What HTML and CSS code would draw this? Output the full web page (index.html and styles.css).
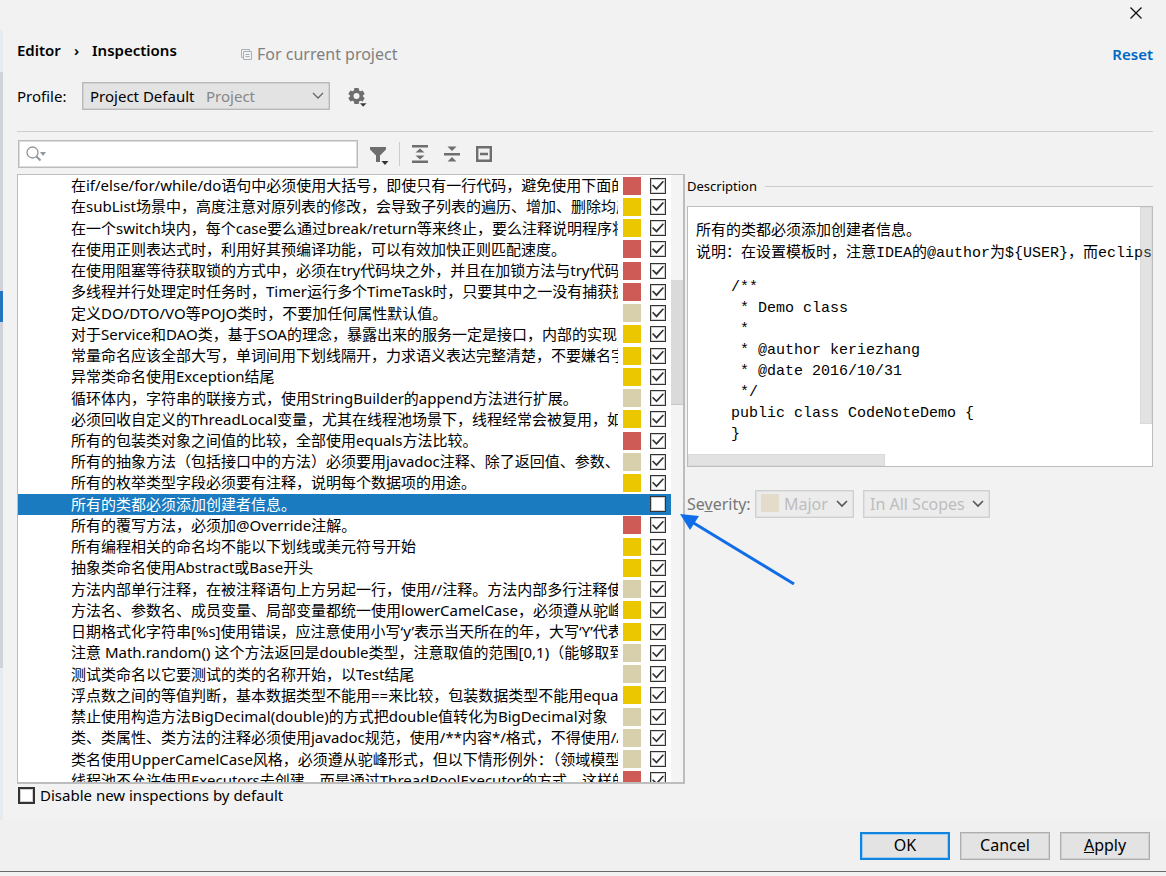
FILE: index.html
```html
<!DOCTYPE html>
<html lang="en">
<head>
<meta charset="utf-8">
<title>Settings</title>
<link rel="stylesheet" href="styles.css">
</head>
<body>
<div class="dialog">
  <header class="titlebar">
    <button class="close" type="button" aria-label="Close">
      <svg width="12" height="12" viewBox="0 0 12 12"><path d="M0.5 0.5l11 11M11.5 0.5l-11 11" stroke="#111" stroke-width="1.3" fill="none"/></svg>
    </button>
  </header>
  <div class="body">
    <aside class="nav-edge"><div class="nav-thumb"><div class="nav-selected"></div></div></aside>
    <main class="page">
      <div class="heading">
        <nav class="crumbs"><span>Editor</span><span class="sep">›</span><span>Inspections</span></nav>
        <span class="scope">
          <svg width="11" height="11" viewBox="0 0 11 11" fill="none" stroke="#a9b1b8"><path d="M2.5 8.5h-2v-8h8v2"/><path d="M2.500 2.500h8v8h-8z" fill="#f2f2f2"/><path d="M4.500 5.500h4M4.500 7.500h4"/></svg>
          For current project
        </span>
        <a class="reset" href="#">Reset</a>
      </div>
      <div class="profile">
        <label for="profile">Profile:</label>
        <span class="combo combo-profile">
          <select id="profile"><option>Project Default</option></select>
          <span class="combo-hint">Project</span>
          <svg class="chevron" width="12" height="8" viewBox="0 0 12 8"><path d="M1 1l5 5 5-5" fill="none" stroke="#666" stroke-width="1.3"/></svg>
        </span>
        <button class="icon" type="button" aria-label="Profile actions">
          <svg width="20" height="21" viewBox="0 0 20 21"><path fill="#6e6e6e" fill-rule="evenodd" d="M6.400 1h4.200l.5 2.400 1.300.8 2.300-.8 2 3.500-1.800 1.600v1l1.800 1.600-2 3.500-2.300-.8-1.300.8-.5 2.400H6.400l-.5-2.400-1.300-.8-2.300.8-2-3.500 1.800-1.600v-1L.3 6.900l2-3.500 2.300.8 1.300-.8zM8.500 6a3 3 0 1 0 0 6 3 3 0 0 0 0-6z"/><path d="M11.500 16h7.500L15.200 20z" fill="#333" stroke="#f2f2f2" stroke-width="0.600"/></svg>
        </button>
      </div>
      <div class="columns">
        <section class="left">
          <div class="toolbar">
            <div class="search">
              <svg width="20" height="16" viewBox="0 0 20 16"><circle cx="6.500" cy="6.500" r="5.500" fill="none" stroke="#8e979e" stroke-width="1.300"/><path d="M10.500 10.500l4 4" stroke="#8e979e" stroke-width="2"/><path d="M14 6h6l-3 4z" fill="#8e979e"/></svg>
              <input type="text" aria-label="Search inspections">
            </div>
            <button class="icon filter" type="button" aria-label="Filter">
              <svg width="19" height="19" viewBox="0 0 19 19"><path d="M0 1h16v2.500L10 9.500V16H6V9.500L0 3.500z" fill="#6e6e6e"/><path d="M11.500 15h7L15 19z" fill="#333"/></svg>
            </button>
            <span class="divider"></span>
            <button class="icon" type="button" aria-label="Expand all">
              <svg width="16" height="18" viewBox="0 0 16 18" fill="#6e6e6e"><path d="M0 0h16v2.500H0zM0 15.500h16V18H0zM8 3.500l4.500 4h-9zM8 14.500l4.500-4h-9z"/></svg>
            </button>
            <button class="icon" type="button" aria-label="Collapse all">
              <svg width="16" height="18" viewBox="0 0 16 18" fill="#6e6e6e"><path d="M0 8h16v2.500H0zM3.500 1.500h9L8 6zM3.500 16.500h9L8 12z"/></svg>
            </button>
            <button class="icon" type="button" aria-label="Reset to empty">
              <svg width="16" height="16" viewBox="0 0 16 16" fill="none" stroke="#6e6e6e" stroke-width="2.400"><path d="M1.200 1.200h13.600v13.600H1.200zM4 8h8"/></svg>
            </button>
          </div>
          <div class="tree">
            <ul class="rows" id="rows"></ul>
            <div class="tree-track"><div class="tree-thumb"></div></div>
          </div>
          <label class="disable"><input class="check big" type="checkbox">Disable new inspections by default</label>
        </section>
        <section class="right">
          <h2 class="legend">Description</h2>
          <div class="description">
            <p>所有的类都必须添加创建者信息。<br>说明：在设置模板时，注意IDEA的@author为${USER}，而eclipse的@author为${user}</p>
<pre>/**
 * Demo class
 *
 * @author keriezhang
 * @date 2016/10/31
 */
public class CodeNoteDemo {
}</pre>
            <div class="desc-vthumb"></div>
            <div class="desc-hthumb"></div>
          </div>
          <div class="severity">
            <label for="severity">Se<u>v</u>erity:</label>
            <span class="combo combo-severity">
              <select id="severity" disabled><option>Major</option></select>
              <span class="combo-swatch"></span>
              <svg class="chevron" width="12" height="8" viewBox="0 0 12 8"><path d="M1 1l5 5 5-5" fill="none" stroke="#555" stroke-width="1.600"/></svg>
            </span>
            <span class="combo combo-scope">
              <select aria-label="Scope" disabled><option>In All Scopes</option></select>
              <svg class="chevron" width="12" height="8" viewBox="0 0 12 8"><path d="M1 1l5 5 5-5" fill="none" stroke="#555" stroke-width="1.600"/></svg>
            </span>
          </div>
        </section>
      </div>
    </main>
  </div>
  <footer class="actions">
    <button class="btn primary" type="button">OK</button>
    <button class="btn" type="button">Cancel</button>
    <button class="btn" type="button"><u>A</u>pply</button>
  </footer>
  <svg class="arrow" width="116" height="74" viewBox="0 0 116 74"><path d="M12 8L114 70" stroke="#0f6de8" stroke-width="3"/><path d="M0 0l19 2L10 16z" fill="#0f6de8"/></svg>
</div>
<script src="rows.js"></script>
</body>
</html>
```
FILE: rows.js
```js
const inspections = [
  ["critical", "在if/else/for/while/do语句中必须使用大括号，即使只有一行代码，避免使用下面的形式"],
  ["major", "在subList场景中，高度注意对原列表的修改，会导致子列表的遍历、增加、删除均产生异常"],
  ["major", "在一个switch块内，每个case要么通过break/return等来终止，要么注释说明程序将继续执行"],
  ["critical", "在使用正则表达式时，利用好其预编译功能，可以有效加快正则匹配速度。"],
  ["critical", "在使用阻塞等待获取锁的方式中，必须在try代码块之外，并且在加锁方法与try代码块之间"],
  ["critical", "多线程并行处理定时任务时，Timer运行多个TimeTask时，只要其中之一没有捕获抛出的异常"],
  ["minor", "定义DO/DTO/VO等POJO类时，不要加任何属性默认值。"],
  ["major", "对于Service和DAO类，基于SOA的理念，暴露出来的服务一定是接口，内部的实现类用Impl"],
  ["major", "常量命名应该全部大写，单词间用下划线隔开，力求语义表达完整清楚，不要嫌名字长"],
  ["major", "异常类命名使用Exception结尾"],
  ["minor", "循环体内，字符串的联接方式，使用StringBuilder的append方法进行扩展。"],
  ["major", "必须回收自定义的ThreadLocal变量，尤其在线程池场景下，线程经常会被复用，如果不清理"],
  ["critical", "所有的包装类对象之间值的比较，全部使用equals方法比较。"],
  ["minor", "所有的抽象方法（包括接口中的方法）必须要用javadoc注释、除了返回值、参数、异常说明"],
  ["major", "所有的枚举类型字段必须要有注释，说明每个数据项的用途。"],
  ["none", "所有的类都必须添加创建者信息。"],
  ["critical", "所有的覆写方法，必须加@Override注解。"],
  ["major", "所有编程相关的命名均不能以下划线或美元符号开始"],
  ["major", "抽象类命名使用Abstract或Base开头"],
  ["minor", "方法内部单行注释，在被注释语句上方另起一行，使用//注释。方法内部多行注释使用注释"],
  ["major", "方法名、参数名、成员变量、局部变量都统一使用lowerCamelCase，必须遵从驼峰形式"],
  ["major", "日期格式化字符串[%s]使用错误，应注意使用小写‘y’表示当天所在的年，大写‘Y’代表week"],
  ["minor", "注意 Math.random() 这个方法返回是double类型，注意取值的范围[0,1)（能够取到零值）"],
  ["minor", "测试类命名以它要测试的类的名称开始，以Test结尾"],
  ["major", "浮点数之间的等值判断，基本数据类型不能用==来比较，包装数据类型不能用equals来判断"],
  ["minor", "禁止使用构造方法BigDecimal(double)的方式把double值转化为BigDecimal对象"],
  ["minor", "类、类属性、类方法的注释必须使用javadoc规范，使用/**内容*/格式，不得使用//xxx方式"],
  ["minor", "类名使用UpperCamelCase风格，必须遵从驼峰形式，但以下情形例外：（领域模型的相关命名）"],
  ["critical", "线程池不允许使用Executors去创建，而是通过ThreadPoolExecutor的方式，这样的处理方式"]
];

const list = document.getElementById("rows");
inspections.forEach(([level, text], i) => {
  const row = document.createElement("li");
  row.className = level === "none" ? "row selected" : "row";
  const label = document.createElement("label");
  label.className = "row-text";
  label.htmlFor = "inspection-" + i;
  label.textContent = text;
  const swatch = document.createElement("span");
  swatch.className = "swatch " + level;
  const box = document.createElement("input");
  box.type = "checkbox";
  box.className = "check";
  box.id = "inspection-" + i;
  box.checked = level !== "none";
  row.append(label, swatch, box);
  list.append(row);
});
```
FILE: styles.css
```css
* { box-sizing: border-box; }
body {
  margin: 0;
  background: #f2f2f2;
  color: #000;
  font: 15px/21px "Noto Sans", "Noto Sans CJK SC", sans-serif;
}
button, select, input { font: inherit; color: inherit; margin: 0; }
.dialog {
  position: relative;
  display: flex;
  flex-direction: column;
  min-height: 100vh;
  padding-bottom: 4px;
}
.titlebar { display: flex; justify-content: flex-end; height: 30px; padding: 0 24px; }
.close, .icon {
  display: flex;
  align-items: center;
  justify-content: center;
  padding: 0;
  border: 0;
  background: none;
}
.close { height: 26px; }
.body { display: flex; flex: 1; }

.nav-edge { width: 3px; padding: 42px 0 152px; background: #e6ebf0; display: flex; }
.nav-thumb { flex: 1; background: #cfd2d9; padding-top: 219px; }
.nav-selected { height: 31px; background: #2675bf; }

.page { flex: 1; min-width: 0; padding: 0 13px 0 14px; }
.heading { display: flex; align-items: center; height: 45px; }
.crumbs { display: flex; gap: 13px; width: 224px; padding-bottom: 4px; font-weight: 600; }
.scope { display: flex; align-items: center; gap: 5px; padding-top: 4px; color: #808080; font-size: 16px; }
.reset { margin-left: auto; padding-top: 4px; color: #0068c4; font-weight: 600; text-decoration: none; }

.profile { display: flex; align-items: center; height: 57px; padding-bottom: 14px; border-bottom: 1px solid #cdcdcd; }
.profile label { width: 65px; }
.profile .icon { margin-left: 18px; padding-top: 3px; }
.combo { position: relative; display: flex; }
.combo select {
  appearance: none;
  width: 100%;
  height: 28px;
  padding: 0 7px;
  border: 1px solid #b8b8b8;
  border-radius: 0;
  background: #e3e3e3;
  box-shadow: inset 0 0 0 1px #d2d2d2;
  opacity: 1;
}
.combo-profile { width: 248px; }
.combo-hint { position: absolute; left: 124px; top: 4px; color: #878787; pointer-events: none; }
.chevron { position: absolute; right: 6px; top: 10px; pointer-events: none; }

.columns { display: grid; grid-template-columns: minmax(0, 668fr) minmax(0, 466fr); gap: 2px; }
.toolbar { display: flex; align-items: center; gap: 16px; height: 42px; padding: 2px 0 0 1px; }
.search {
  display: flex;
  align-items: center;
  width: 340px;
  height: 28px;
  padding: 0 7px;
  border: 1px solid #bcbcbc;
  background: #fff;
  box-shadow: inset 0 0 0 1px #dcdcdc;
}
.search input { flex: 1; min-width: 0; border: 0; outline: 0; background: none; }
.filter { margin: 2px -6px 0 -4px; }
.divider { width: 1px; height: 24px; margin-right: -4px; background: #cdcdcd; }

.tree {
  display: flex;
  height: 610px;
  overflow: hidden;
  border: solid #bdbdbd;
  border-width: 1px 2px 2px 1px;
  background: #fff;
}
.rows {
  display: grid;
  grid-auto-rows: 1fr;
  flex: 1;
  min-width: 0;
  height: 616px;
  margin: 0;
  padding: 0;
  list-style: none;
}
.row { display: flex; align-items: center; min-width: 0; min-height: 0; padding: 0 5px 0 53px; }
.row-text { flex: 1; min-width: 0; overflow: hidden; white-space: nowrap; }
.swatch { width: 18px; height: 18px; margin: 0 9px 0 5px; }
.critical { background: #cf5b56; }
.major { background: #ebc700; }
.minor { background: #d8cfac; }
.selected { background: #1a7bc1; color: #fff; }
.check {
  appearance: none;
  flex: none;
  width: 16px;
  height: 16px;
  border: 1px solid #333;
  outline: 0;
  background: #fff;
  box-shadow: inset 0 0 0 1px #cfcfcf;
  display: grid;
  place-items: center;
}
.check:checked::before {
  content: "";
  width: 12px;
  height: 10px;
  background: #333;
  clip-path: polygon(0 48%, 10% 38%, 37% 70%, 90% 2%, 100% 12%, 38% 96%);
}
.tree-track { width: 12px; padding-top: 105px; background: #f4f4f4; }
.tree-thumb { height: 125px; background: #dadada; border-bottom: 1px solid #c8c8c8; }
.disable { display: flex; align-items: center; gap: 5px; height: 23px; padding-left: 1px; }
.big { width: 17px; height: 17px; border-width: 2px; }

.right { min-width: 0; padding-top: 43px; }
.legend { display: flex; align-items: center; gap: 8px; margin: 0; height: 22px; font-size: 13px; font-weight: 400; }
.legend::after { content: ""; flex: 1; height: 1px; background: #cdcdcd; }
.description {
  position: relative;
  height: 261px;
  margin-top: 9px;
  padding: 14px 8px 12px;
  overflow: hidden;
  border: 1px solid #bdbdbd;
  background: #fff;
  font: 15px/22px "Liberation Mono", "Noto Sans CJK SC", monospace;
  white-space: nowrap;
}
.description p { margin: 0; }
.description pre { margin: 12px 0 0 35px; font: inherit; line-height: 21px; }
.desc-vthumb, .desc-hthumb { position: absolute; background: rgba(150, 150, 150, 0.28); border: 1px solid rgba(150, 150, 150, 0.1); }
.desc-vthumb { top: 0; right: 0; width: 12px; height: 217px; }
.desc-hthumb { left: 0; bottom: 0; width: 197px; height: 12px; }
.severity { display: flex; align-items: center; height: 28px; margin-top: 23px; color: #777; font-size: 16px; }
.severity label { width: 68px; white-space: nowrap; }
.severity select { background: #ececec; border-color: #d0d0d0; box-shadow: inset 0 0 0 1px #e0e0e0; color: #bdbdbd; }
.combo-severity { width: 99px; }
.combo-severity select { padding-left: 28px; }
.combo-swatch { position: absolute; left: 6px; top: 4px; width: 18px; height: 18px; background: #e3dccb; }
.combo-scope { width: 127px; margin-left: 9px; }
.combo-scope select { padding-left: 6px; }

.actions {
  display: flex;
  justify-content: flex-end;
  gap: 10px;
  height: 52px;
  padding: 12px 16px 0 0;
  border-bottom: 1px solid #6b6b6b;
  background: #f0f0f0;
}
.btn {
  width: 90px;
  height: 28px;
  padding: 0 0 2px;
  border: 1px solid #adadad;
  background: #e3e3e3;
  box-shadow: inset 0 0 0 1px #cfcfcf;
  font-size: 16px;
}
.primary { border-color: #1085e0; box-shadow: inset 0 0 0 1px #1085e0, inset 0 0 0 2px #a5cdee; }
.arrow { position: absolute; left: 680px; top: 514px; pointer-events: none; }
```
